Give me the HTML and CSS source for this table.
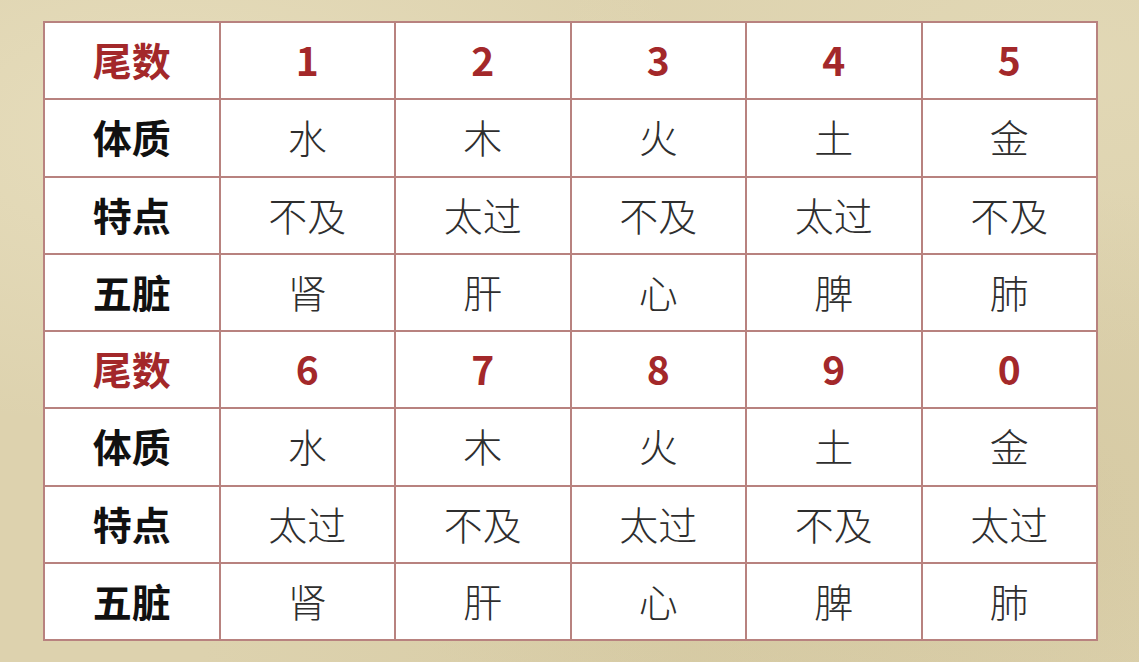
FILE: index.html
```html
<!DOCTYPE html>
<html lang="zh">
<head>
<meta charset="utf-8">
<link rel="stylesheet" href="styles.css">
</head>
<body>
<div class="page">
<table class="grid">
<tr class="head"><th>尾数</th><td>1</td><td>2</td><td>3</td><td>4</td><td>5</td></tr>
<tr><th>体质</th><td>水</td><td>木</td><td>火</td><td>土</td><td>金</td></tr>
<tr><th>特点</th><td>不及</td><td>太过</td><td>不及</td><td>太过</td><td>不及</td></tr>
<tr><th>五脏</th><td>肾</td><td>肝</td><td>心</td><td>脾</td><td>肺</td></tr>
<tr class="head"><th>尾数</th><td>6</td><td>7</td><td>8</td><td>9</td><td>0</td></tr>
<tr><th>体质</th><td>水</td><td>木</td><td>火</td><td>土</td><td>金</td></tr>
<tr><th>特点</th><td>太过</td><td>不及</td><td>太过</td><td>不及</td><td>太过</td></tr>
<tr><th>五脏</th><td>肾</td><td>肝</td><td>心</td><td>脾</td><td>肺</td></tr>
</table>
</div>
</body>
</html>
```
FILE: styles.css
```css
html, body { margin: 0; padding: 0; }
body {
  width: 1139px;
  height: 662px;
  overflow: hidden;
  background: #ddd2ae;
  background-image:
    radial-gradient(ellipse at 15% 20%, rgba(238,230,200,0.55), transparent 40%),
    radial-gradient(ellipse at 85% 75%, rgba(200,186,142,0.35), transparent 45%),
    radial-gradient(ellipse at 60% 100%, rgba(210,198,158,0.45), transparent 50%),
    radial-gradient(ellipse at 95% 10%, rgba(232,224,192,0.4), transparent 35%);
  font-family: "Noto Sans CJK SC", "Noto Sans", sans-serif;
}
.page {
  padding: 21px 0 0 43px;
}
.grid {
  width: 1055px;
  height: 620px;
  border-collapse: collapse;
  table-layout: fixed;
  background: #ffffff;
  border: 2px solid #a0645f;
}
.grid th, .grid td {
  border: 2px solid #b8827f;
  text-align: center;
  vertical-align: middle;
  padding: 0 0 2px;
  font-size: 39px;
  line-height: 1;
}
.grid th {
  font-weight: 700;
  color: #111111;
}
.grid td {
  font-weight: 300;
  color: #2e2e2e;
}
.grid .head th, .grid .head td {
  color: #a3282a;
  font-weight: 700;
}
```
